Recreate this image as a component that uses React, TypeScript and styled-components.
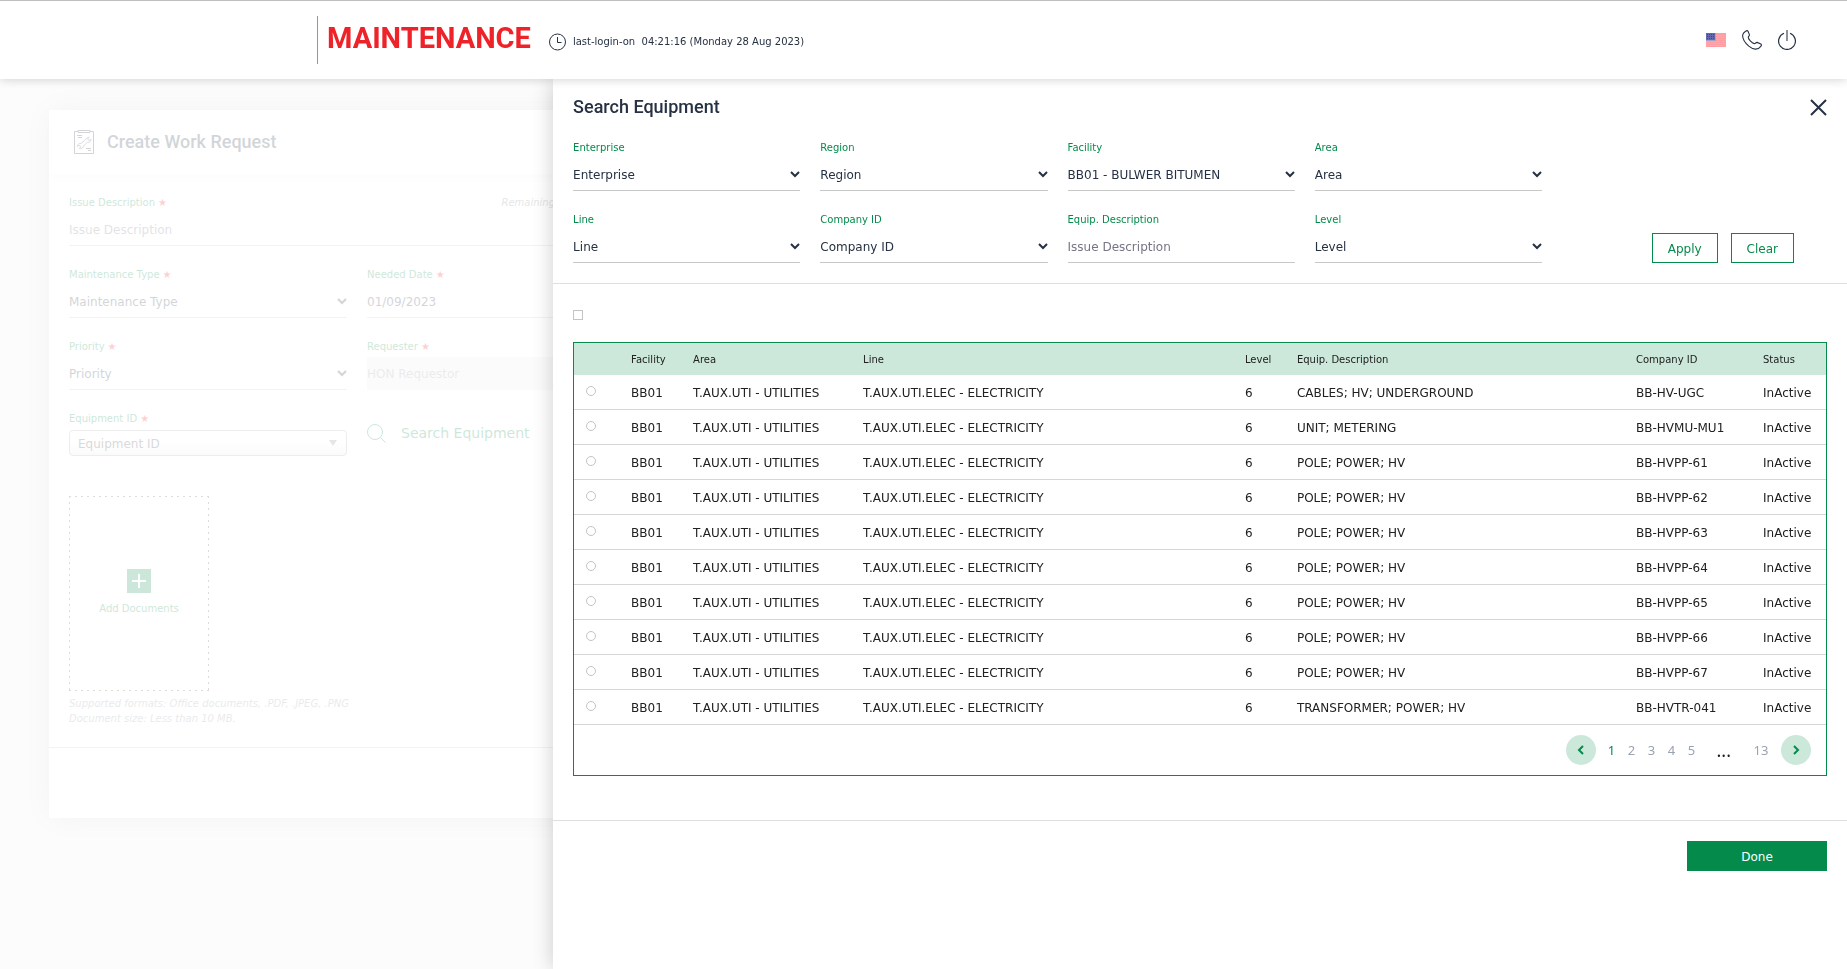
import React, { useState } from 'react';
import styled, { createGlobalStyle, css } from 'styled-components';

const c = {
  green: '#048b4b',
  mint: '#cce8da',
  ink: '#263143',
  text: '#212121',
  line: '#c8c8c8',
  rule: '#dfdfdf',
  muted: '#9aa3b0',
  red: '#ee2229',
};

const GlobalStyle = createGlobalStyle`
  *, *::before, *::after { box-sizing: border-box; }
  body {
    margin: 0;
    background: #fcfcfc;
    color: ${c.ink};
    font: 12px/16px 'DejaVu Sans', 'Liberation Sans', sans-serif;
  }
  button, input, select { font: inherit; color: inherit; margin: 0; }
  button { cursor: pointer; }
`;

/* ---------- top bar ---------- */

const TopBar = styled.header`
  position: relative;
  z-index: 3;
  display: flex;
  align-items: center;
  justify-content: space-between;
  height: 79px;
  padding: 0 51px 0 317px;
  border-top: 1px solid #bfbfbf;
  background: #fff;
  box-shadow: 0 0 10px rgba(0, 0, 0, 0.2);
`;

const Brand = styled.div`
  display: flex;
  align-items: center;
`;

const AppName = styled.h1`
  margin: 0 18px 0 0;
  padding: 0 0 4px 9px;
  border-left: 1px solid #8f98a3;
  color: ${c.red};
  font: 700 29px/44px Roboto, sans-serif;
`;

const LastLogin = styled.p`
  display: flex;
  align-items: center;
  gap: 7px;
  margin: 0;
  padding-top: 4px;
  font-size: 10px;
  line-height: 18px;
  white-space: pre;
`;

const Tools = styled.nav`
  display: flex;
  align-items: center;
  gap: 16px;
`;

const IconButton = styled.button`
  display: flex;
  padding: 0;
  border: 0;
  background: none;
`;

/* ---------- form fields ---------- */

const FieldBox = styled.div<{ $wide?: boolean }>`
  display: flex;
  flex-direction: column;
  min-width: 0;
  ${(p) => p.$wide && css`grid-column: span 2;`}
`;

const FieldHead = styled.div`
  display: flex;
  justify-content: space-between;
  height: 16px;
  font-size: 10px;
  line-height: 18px;
`;

const FieldLabel = styled.label`
  color: ${c.green};
`;

const Star = styled.span`
  margin-left: 3px;
  color: ${c.red};
  font-weight: 700;
`;

const Hint = styled.em`
  padding-right: 90px;
  opacity: 0.6;
`;

const ControlWrap = styled.div<{ $shaded?: boolean }>`
  position: relative;
  display: flex;
  height: 36px;
  border-bottom: 1px solid ${c.line};
  ${(p) =>
    p.$shaded &&
    css`
      height: 33px;
      margin-top: 3px;
      border-bottom-color: transparent;
      background: #ececec;
    `}
  svg {
    position: absolute;
    right: 0;
    top: 16px;
    pointer-events: none;
  }
`;

const controlCss = css`
  width: 100%;
  min-width: 0;
  padding: 4px 0 0;
  border: 0;
  border-radius: 0;
  outline: 0;
  background: transparent;
  appearance: none;
`;

const TextInput = styled.input`
  ${controlCss}
  &::placeholder { color: #757588; opacity: 1; }
  &:disabled { padding-top: 1px; opacity: 0.4; }
`;

const SelectInput = styled.select`
  ${controlCss}
  opacity: 1;
`;

const Chevron = () => (
  <svg width="10" height="7" viewBox="0 0 10 7" fill="none" stroke="currentColor" strokeWidth="2">
    <path d="M1 1 L5 5 L9 1" />
  </svg>
);

type FieldProps = {
  id: string;
  label: string;
  kind?: 'select' | 'text' | 'placeholder' | 'disabled';
  value?: string;
  required?: boolean;
  hint?: string;
  wide?: boolean;
};

const Field = ({ id, label, kind = 'select', value = label, required, hint, wide }: FieldProps) => (
  <FieldBox $wide={wide}>
    <FieldHead>
      <FieldLabel htmlFor={id}>
        {label}
        {required && <Star>★</Star>}
      </FieldLabel>
      {hint && <Hint>{hint}</Hint>}
    </FieldHead>
    <ControlWrap $shaded={kind === 'disabled'}>
      {kind === 'select' ? (
        <>
          <SelectInput id={id}>
            <option>{value}</option>
          </SelectInput>
          <Chevron />
        </>
      ) : (
        <TextInput
          id={id}
          placeholder={kind === 'placeholder' ? value : undefined}
          defaultValue={kind === 'placeholder' ? undefined : value}
          disabled={kind === 'disabled'}
        />
      )}
    </ControlWrap>
  </FieldBox>
);

/* ---------- work request card ---------- */

const Page = styled.main`
  min-height: calc(100vh - 79px);
  padding: 31px 0 40px 49px;
  background: #fcfcfc;
  overflow: hidden;
`;

const Card = styled.section`
  background: #fff;
  box-shadow: 0 0 30px rgba(0, 0, 0, 0.04);
`;

const CardHead = styled.div`
  display: flex;
  align-items: center;
  gap: 13px;
  height: 64px;
  padding: 0 25px;
  box-shadow: 0 6px 10px rgba(0, 0, 0, 0.01);
  h2 { margin: 0; font: 500 18px/24px Roboto, sans-serif; }
  svg, h2 { opacity: 0.2; }
`;

const CardBody = styled.div`
  padding: 20px 20px 21px;
  opacity: 0.2;
`;

const FormGrid = styled.div`
  display: grid;
  grid-template-columns: repeat(auto-fill, 278px);
  gap: 20px;
`;

const RowBreak = styled.div`
  grid-column: 3 / -1;
`;

const BoxedSelect = styled.div`
  position: relative;
  display: flex;
  height: 26px;
  margin-top: 4px;
  border: 1px solid #aaa;
  border-radius: 4px;
  background: linear-gradient(#fff 50%, #eee);
  select {
    width: 100%;
    padding: 2px 8px 0;
    border: 0;
    outline: 0;
    background: none;
    color: #444;
    appearance: none;
  }
  svg { position: absolute; right: 9px; top: 9px; pointer-events: none; }
`;

const SearchLink = styled.a`
  display: flex;
  align-items: center;
  gap: 15px;
  height: 46px;
  color: ${c.green};
  font-size: 14px;
  text-decoration: none;
`;

const dots = (dir: string) => `repeating-linear-gradient(${dir}, #555 0 2px, transparent 2px 6px)`;

const DropZone = styled.button`
  display: flex;
  flex-direction: column;
  align-items: center;
  justify-content: center;
  gap: 7px;
  width: 140px;
  height: 195px;
  margin: 40px 0 5px;
  border: 0;
  background:
    ${dots('to right')} top / 100% 1px no-repeat,
    ${dots('to right')} bottom / 100% 1px no-repeat,
    ${dots('to bottom')} left / 1px 100% no-repeat,
    ${dots('to bottom')} right / 1px 100% no-repeat;
  color: ${c.green};
  font-size: 10px;
  line-height: 18px;
`;

const Note = styled.p`
  margin: 0;
  font-size: 10px;
  line-height: 15px;
  font-style: italic;
  opacity: 0.5;
`;

const CardFoot = styled.div`
  height: 71px;
  border-top: 1px solid #f3f3f3;
`;

/* ---------- search drawer ---------- */

const Drawer = styled.aside`
  position: fixed;
  z-index: 2;
  top: 79px;
  right: 0;
  bottom: 0;
  width: calc(70% + 1px);
  overflow-y: auto;
  background: #fff;
  box-shadow: 0 0 20px rgba(0, 0, 0, 0.2);
`;

const DrawerHead = styled.div`
  display: flex;
  align-items: center;
  justify-content: space-between;
  padding: 16px 20px 20px;
  h2 { margin: 0; font: 500 18px/24px Roboto, sans-serif; }
`;

const Filters = styled.form`
  display: grid;
  grid-template-columns: repeat(4, 1fr) 232px;
  gap: 20px;
  padding: 0 53px 20px 20px;
  border-bottom: 1px solid ${c.rule};
`;

const FilterActions = styled.div`
  grid-area: 2 / 5;
  display: flex;
  align-items: flex-end;
  justify-content: flex-end;
  gap: 13px;
`;

const OutlineButton = styled.button`
  height: 30px;
  padding: 2px 15px 0;
  border: 1px solid ${c.green};
  background: #fff;
  color: ${c.green};
`;

const Results = styled.div`
  padding: 26px 20px 44px;
`;

const Tick = styled.input<{ $round?: boolean }>`
  display: block;
  width: 10px;
  height: 10px;
  margin: 0 0 ${(p) => (p.$round ? '4px' : '0')};
  border: 1px solid #c4c4c4;
  border-radius: ${(p) => (p.$round ? '50%' : '0')};
  background: #fff;
  appearance: none;
  &:checked { background: ${c.green}; }
`;

const TableFrame = styled.div`
  margin-top: 22px;
  border: 1px solid ${c.green};
`;

const Table = styled.table`
  width: 100%;
  border-collapse: separate;
  border-spacing: 0;
  table-layout: fixed;
  color: ${c.text};
  text-align: left;
  white-space: nowrap;
  th, td { padding: 1px 12px 0; }
  th { height: 32px; background: ${c.mint}; font-size: 10px; font-weight: 400; }
  td { height: 35px; border-bottom: 1px solid #d6d6d6; }
`;

const Col = styled.col<{ $w?: string }>`
  width: ${(p) => p.$w ?? 'auto'};
`;

const Pager = styled.nav`
  display: flex;
  align-items: center;
  justify-content: flex-end;
  height: 50px;
  padding: 0 15px;
  font-family: 'Noto Sans', sans-serif;
  font-size: 13px;
`;

const PageLink = styled.a<{ $on?: boolean }>`
  width: 20px;
  color: ${(p) => (p.$on ? c.green : c.muted)};
  text-align: center;
  text-decoration: none;
`;

const Ellipsis = styled.span`
  margin: 0 20px 0 15px;
  color: ${c.text};
  font-size: 18px;
`;

const PageStep = styled.button`
  display: flex;
  align-items: center;
  justify-content: center;
  width: 30px;
  height: 30px;
  padding: 0;
  border: 0;
  border-radius: 50%;
  background: ${c.mint};
  color: ${c.green};
  &:first-child { margin-right: 6px; }
  &:last-child { margin-left: 10px; }
`;

const DrawerFoot = styled.div`
  display: flex;
  justify-content: flex-end;
  padding: 20px;
  border-top: 1px solid ${c.rule};
`;

const DoneButton = styled.button`
  width: 140px;
  height: 30px;
  padding: 2px 0 0;
  border: 0;
  background: ${c.green};
  color: #fff;
`;

const rows: [string, string][] = [
  ['CABLES; HV; UNDERGROUND', 'BB-HV-UGC'],
  ['UNIT; METERING', 'BB-HVMU-MU1'],
  ['POLE; POWER; HV', 'BB-HVPP-61'],
  ['POLE; POWER; HV', 'BB-HVPP-62'],
  ['POLE; POWER; HV', 'BB-HVPP-63'],
  ['POLE; POWER; HV', 'BB-HVPP-64'],
  ['POLE; POWER; HV', 'BB-HVPP-65'],
  ['POLE; POWER; HV', 'BB-HVPP-66'],
  ['POLE; POWER; HV', 'BB-HVPP-67'],
  ['TRANSFORMER; POWER; HV', 'BB-HVTR-041'],
];

const Clock = () => (
  <svg width="17" height="18" viewBox="0 0 17 18" fill="none" stroke={c.ink}>
    <circle cx="8.5" cy="9" r="8" />
    <path d="M8.5 4v5.500h4" />
  </svg>
);

const Flag = () => (
  <svg width="20" height="14" viewBox="0 0 20 14">
    <rect width="20" height="14" fill="#ff9da3" />
    <path d="M0 2.500h20M0 4.500h20M0 6.500h20M0 8.500h20M0 10.500h20M0 12.500h20" stroke="#f8b0b5" strokeWidth="0.500" />
    <rect width="10" height="8" fill="#a79fcb" />
    <rect width="9" height="7" fill="#6468b0" />
    <path d="M1 1.500h8M1 3.500h8M1 5.500h8" stroke="#41459a" strokeDasharray="1 1" />
  </svg>
);

const Phone = () => (
  <svg width="20" height="20" viewBox="0 0 20 20" fill="none" stroke={c.ink} strokeWidth="1.100">
    <path d="M3.600 1.200C4.600.4 5.600.4 6 1.200L7.400 4.600C7.800 5.800 6.300 6.300 6.300 7.400C6.500 9.600 10 13 12.200 13.600C13.400 13.800 14 12.200 15.200 12.400L18.800 14C19.800 14.600 19.400 15.600 18.800 16.400C16 20.400 11 19.800 6.800 16.200C2.400 12.200.2 7.400.8 4.600C1.200 3 2.400 2 3.600 1.200Z" />
  </svg>
);

const Power = () => (
  <svg width="18" height="20" viewBox="0 0 18 20" fill="none" stroke={c.ink} strokeWidth="1.200">
    <path d="M6 3.200A8.400 8.400 0 1 0 12 3.200" />
    <path d="M9 0V11" stroke="#8b929c" strokeWidth="2" />
  </svg>
);

const Clipboard = () => (
  <svg width="20" height="24" viewBox="0 0 20 24" fill="none" stroke={c.ink}>
    <path d="M4 1.500H.500v22h19v-22H16M4 .500h12v2H4zM3 5.500h5M4 7.500h4M12 18.500h5M14 20.500h3" />
    <g strokeWidth="0.800">
      <path d="M12.600 8.200a3 3 0 0 1 2.600-.9l-1.400 1.500.6 1.400 1.400.2 1.100-1.300a3 3 0 0 1-3.700 3.300L9.300 16.200a3 3 0 0 1-3 2.500 2.600 2.600 0 0 1-1-.2l1.300-1.400-.5-1.400-1.400-.2-1.100 1.200a2.900 2.900 0 0 1 3.600-3.300l4.300-3.500z" />
    </g>
  </svg>
);

const App = () => {
  const [picked, setPicked] = useState<number | null>(null);

  return (
    <>
      <GlobalStyle />
      <TopBar>
        <Brand>
          <AppName>MAINTENANCE</AppName>
          <LastLogin>
            <Clock />
            <span>last-login-on  04:21:16 (Monday 28 Aug 2023)</span>
          </LastLogin>
        </Brand>
        <Tools>
          <IconButton aria-label="Language"><Flag /></IconButton>
          <IconButton aria-label="Call"><Phone /></IconButton>
          <IconButton aria-label="Log out"><Power /></IconButton>
        </Tools>
      </TopBar>

      <Page>
        <Card>
          <CardHead>
            <Clipboard />
            <h2>Create Work Request</h2>
          </CardHead>
          <CardBody>
            <FormGrid>
              <Field id="issue" label="Issue Description" kind="placeholder" required hint="Remaining" wide />
              <RowBreak />
              <Field id="type" label="Maintenance Type" required />
              <Field id="needed" label="Needed Date" kind="text" value="01/09/2023" required />
              <RowBreak />
              <Field id="priority" label="Priority" required />
              <Field id="requester" label="Requester" kind="disabled" value="HON Requestor" required />
              <RowBreak />
              <FieldBox>
                <FieldHead>
                  <FieldLabel htmlFor="equipment">Equipment ID<Star>★</Star></FieldLabel>
                </FieldHead>
                <BoxedSelect>
                  <select id="equipment">
                    <option>Equipment ID</option>
                  </select>
                  <svg width="8" height="6" viewBox="0 0 8 6"><path d="M0 0h8L4 6z" fill="#888" /></svg>
                </BoxedSelect>
              </FieldBox>
              <SearchLink href="#search">
                <svg width="19" height="19" viewBox="0 0 19 19" fill="none" stroke={c.green}>
                  <circle cx="8" cy="8" r="7.500" />
                  <path d="M13.500 13.500L18.500 18.500" />
                </svg>
                Search Equipment
              </SearchLink>
            </FormGrid>
            <DropZone>
              <svg width="24" height="24" viewBox="0 0 24 24">
                <rect width="24" height="24" fill={c.green} />
                <path d="M12 5v14M5 12h14" stroke="#fff" strokeWidth="2" />
              </svg>
              Add Documents
            </DropZone>
            <Note>Supported formats: Office documents, .PDF, .JPEG, .PNG</Note>
            <Note>Document size: Less than 10 MB.</Note>
          </CardBody>
          <CardFoot />
        </Card>
      </Page>

      <Drawer aria-label="Search Equipment">
        <DrawerHead>
          <h2>Search Equipment</h2>
          <IconButton aria-label="Close">
            <svg width="17" height="18" viewBox="0 0 17 18" stroke={c.ink} strokeWidth="2">
              <path d="M1 2L16 17M16 2L1 17" />
            </svg>
          </IconButton>
        </DrawerHead>
        <Filters onSubmit={(e) => e.preventDefault()}>
          <Field id="f-enterprise" label="Enterprise" />
          <Field id="f-region" label="Region" />
          <Field id="f-facility" label="Facility" value="BB01 - BULWER BITUMEN" />
          <Field id="f-area" label="Area" />
          <span />
          <Field id="f-line" label="Line" />
          <Field id="f-company" label="Company ID" />
          <Field id="f-desc" label="Equip. Description" kind="placeholder" value="Issue Description" />
          <Field id="f-level" label="Level" />
          <FilterActions>
            <OutlineButton>Apply</OutlineButton>
            <OutlineButton type="reset">Clear</OutlineButton>
          </FilterActions>
        </Filters>

        <Results>
          <Tick type="checkbox" aria-label="Select all" />
          <TableFrame>
            <Table>
              <colgroup>
                <Col $w="45px" />
                <Col $w="62px" />
                <Col $w="170px" />
                <Col $w="30.5%" />
                <Col $w="52px" />
                <Col />
                <Col $w="127px" />
                <Col $w="75px" />
              </colgroup>
              <thead>
                <tr>
                  <th />
                  <th>Facility</th>
                  <th>Area</th>
                  <th>Line</th>
                  <th>Level</th>
                  <th>Equip. Description</th>
                  <th>Company ID</th>
                  <th>Status</th>
                </tr>
              </thead>
              <tbody>
                {rows.map(([desc, id], i) => (
                  <tr key={id}>
                    <td>
                      <Tick
                        type="radio"
                        name="equipment-row"
                        aria-label={id}
                        $round
                        checked={picked === i}
                        onChange={() => setPicked(i)}
                      />
                    </td>
                    <td>BB01</td>
                    <td>T.AUX.UTI - UTILITIES</td>
                    <td>T.AUX.UTI.ELEC - ELECTRICITY</td>
                    <td>6</td>
                    <td>{desc}</td>
                    <td>{id}</td>
                    <td>InActive</td>
                  </tr>
                ))}
              </tbody>
            </Table>
            <Pager aria-label="Pages">
              <PageStep aria-label="Previous">
                <svg width="7" height="10" viewBox="0 0 7 10" fill="none" stroke="currentColor" strokeWidth="2"><path d="M6 1L2 5l4 4" /></svg>
              </PageStep>
              {['1', '2', '3', '4', '5'].map((n) => (
                <PageLink key={n} href={`#page-${n}`} $on={n === '1'}>{n}</PageLink>
              ))}
              <Ellipsis>...</Ellipsis>
              <PageLink href="#page-13">13</PageLink>
              <PageStep aria-label="Next">
                <svg width="7" height="10" viewBox="0 0 7 10" fill="none" stroke="currentColor" strokeWidth="2"><path d="M1 1l4 4-4 4" /></svg>
              </PageStep>
            </Pager>
          </TableFrame>
        </Results>

        <DrawerFoot>
          <DoneButton>Done</DoneButton>
        </DrawerFoot>
      </Drawer>
    </>
  );
};

export default App;
